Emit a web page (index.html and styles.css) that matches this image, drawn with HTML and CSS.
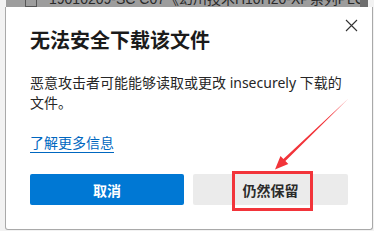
FILE: index.html
```html
<!DOCTYPE html>
<html lang="zh-CN">
<head>
<meta charset="utf-8">
<link rel="stylesheet" href="styles.css">
</head>
<body>
<div class="topbar">
  <span class="file-icon"></span>
  <span class="top-text">19010209-SC C07《幻川技术H10H20-XP系列PLC指...</span>
  <span class="scroll"></span>
</div>
<div class="dialog">
  <button class="close" aria-label="关闭">
    <svg width="13" height="13" viewBox="0 0 13 13"><path d="M1 1 L12 12 M12 1 L1 12" stroke="#333" stroke-width="1.1" fill="none"/></svg>
  </button>
  <h1 class="title">无法安全下载该文件</h1>
  <p class="msg">恶意攻击者可能能够读取或更改 insecurely 下载的文件。</p>
  <a class="link" href="#">了解更多信息</a>
  <div class="actions">
    <button class="btn primary">取消</button>
    <button class="btn secondary">仍然保留</button>
  </div>
</div>
<div class="highlight"></div>
<svg class="arrow" width="374" height="231" viewBox="0 0 374 231">
  <polygon points="348.5,98.5 285.4,161.1 288.3,164 275,169.5 280.5,156 283.4,158.9" fill="#f2343a"/>
</svg>
</body>
</html>
```
FILE: styles.css
```css
html, body {
  margin: 0;
  padding: 0;
}
body {
  width: 374px;
  height: 231px;
  overflow: hidden;
  background: #f2f2f2;
  font-family: "Noto Sans", "Noto Sans CJK SC", sans-serif;
  color: #1a1a1a;
  position: relative;
}
.topbar {
  margin-left: 6px;
  width: 362px;
  height: 7px;
  background: #9d9d9d;
  overflow: hidden;
  display: flex;
  align-items: flex-start;
  position: relative;
}
.file-icon {
  width: 10px;
  height: 12px;
  margin-left: 19px;
  margin-top: -7px;
  border: 1px solid #555;
  flex: none;
}
.top-text {
  margin-left: 12px;
  margin-top: -9px;
  font-family: "Liberation Sans", "Noto Sans CJK SC", sans-serif;
  font-size: 14px;
  line-height: 16px;
  color: #2a2a2a;
  white-space: nowrap;
  flex: none;
}
.scroll {
  position: absolute;
  right: 0;
  top: 0;
  width: 8px;
  height: 7px;
  background: #6e6e6e;
}
.dialog {
  box-sizing: border-box;
  margin-left: 5px;
  width: 368px;
  height: 223px;
  background: #fff;
  border: 1px solid #a9a9a9;
  border-top: none;
  border-radius: 0 0 3px 3px;
  padding: 19px 24px 0 24px;
  position: relative;
}
.close {
  position: absolute;
  left: 339px;
  top: 12px;
  width: 13px;
  height: 13px;
  padding: 0;
  border: none;
  background: none;
  display: block;
}
.close svg { display: block; }
.title {
  margin: 0;
  font-family: "Noto Sans CJK SC", sans-serif;
  font-size: 20px;
  line-height: 28px;
  font-weight: 700;
  color: #1b1b1b;
}
.msg {
  margin: 19px 0 0 0;
  font-size: 14px;
  line-height: 20px;
  color: #262626;
}
.link {
  display: inline-block;
  margin-top: 19px;
  font-family: "Noto Sans CJK SC", sans-serif;
  font-size: 14px;
  line-height: 20px;
  color: #0067c0;
  text-decoration: none;
  border-bottom: 1px solid #0067c0;
}
.actions {
  margin-top: 21px;
  display: grid;
  grid-template-columns: 154px 155px;
  column-gap: 9px;
}
.btn {
  height: 31px;
  border: none;
  border-radius: 2px;
  font-family: "Noto Sans CJK SC", sans-serif;
  font-size: 14px;
  font-weight: 700;
  padding: 0;
}
.primary {
  background: #0078d4;
  color: #fff;
}
.secondary {
  background: #ebebeb;
  color: #2b2b2b;
}
.highlight {
  position: absolute;
  left: 232px;
  top: 171px;
  width: 75px;
  height: 34px;
  border: 3px solid #f2343a;
}
.arrow {
  position: absolute;
  left: 0;
  top: 0;
}
```
